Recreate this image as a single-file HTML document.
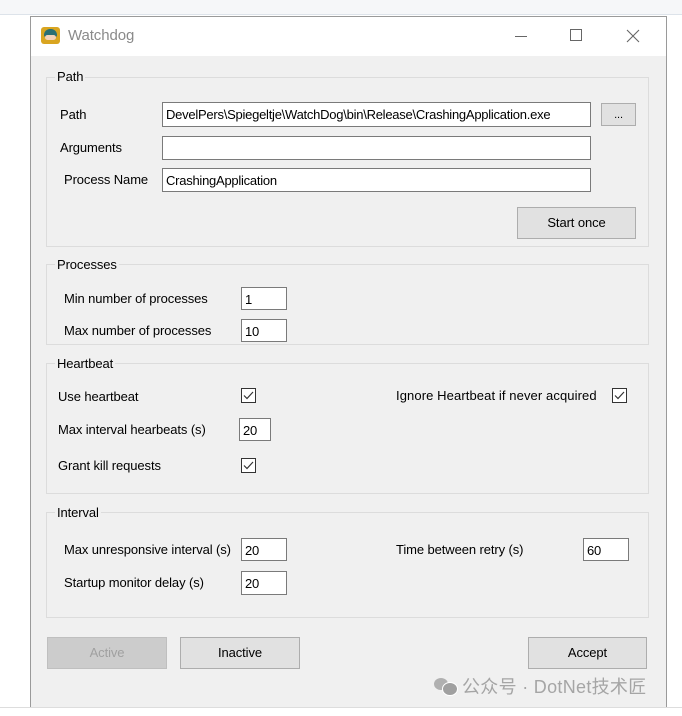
<!DOCTYPE html><html><head><style>
body{margin:0;width:682px;height:716px;background:#fff;position:relative;overflow:hidden;font-family:"Liberation Sans","Noto Sans CJK SC",sans-serif;font-size:13px;letter-spacing:-0.1px;color:#000}
.a{position:absolute}
.top{left:0;top:0;width:682px;height:14px;background:#f6f7f9;border-bottom:1px solid #dde3ea}
.win{left:30px;top:16px;width:635px;height:690px;border:1px solid #9a9a9a;background:#f0f0f0}
.tb{left:0;top:0;width:635px;height:39px;background:#fff}
.g{position:absolute;border:1px solid #dcdcdc}
.lg{position:absolute;background:#f0f0f0;padding:0 2px}
.t{position:absolute;background:#fff;border:1px solid #7a7a7a;box-sizing:border-box;padding:3px 3px;line-height:17px;white-space:nowrap;overflow:hidden;letter-spacing:-0.25px}
.b{position:absolute;background:#e1e1e1;border:1px solid #adadad;box-sizing:border-box;text-align:center}
.c{position:absolute;width:15px;height:15px;border:1px solid #333;box-sizing:border-box;background:#fff}
.l{position:absolute;white-space:nowrap;line-height:16px}
</style></head><body>
<div class="a top"></div>
<div class="a win">
<div class="a tb">
<div class="a" style="left:10px;top:10px;width:19px;height:17px;background:#d9a520;border-radius:3px"></div>
<div class="a" style="left:13px;top:12px;width:13px;height:8px;background:#2a6f73;border-radius:6px 6px 2px 2px"></div>
<div class="a" style="left:14px;top:18px;width:11px;height:5px;background:#f2d1b8;border-radius:3px"></div>
<div class="l" style="left:37px;top:11px;color:#8a8a8a;font-size:15px">Watchdog</div>
<div class="a" style="left:484px;top:19px;width:12px;height:1px;background:#666"></div>
<div class="a" style="left:539px;top:12px;width:12px;height:12px;border:1px solid #666;box-sizing:border-box"></div>
<svg class="a" style="left:595px;top:12px" width="14" height="14"><path d="M1 1L13 13M13 1L1 13" stroke="#666" stroke-width="1.1"/></svg>
</div>
</div>
<div class="g" style="left:46px;top:77px;width:601px;height:168px"></div>
<div class="lg l" style="left:55px;top:69px">Path</div>
<div class="l" style="left:60px;top:107px">Path</div>
<div class="t" style="left:162px;top:102px;width:429px;height:25px">DevelPers\Spiegeltje\WatchDog\bin\Release\CrashingApplication.exe</div>
<div class="b" style="left:601px;top:103px;width:35px;height:23px;line-height:22px;font-size:11px">...</div>
<div class="l" style="left:60px;top:140px">Arguments</div>
<div class="t" style="left:162px;top:136px;width:429px;height:24px"></div>
<div class="l" style="left:64px;top:172px">Process Name</div>
<div class="t" style="left:162px;top:168px;width:429px;height:24px">CrashingApplication</div>
<div class="b" style="left:517px;top:207px;width:119px;height:32px;line-height:30px">Start once</div>
<div class="g" style="left:46px;top:264px;width:601px;height:79px"></div>
<div class="lg l" style="left:55px;top:257px">Processes</div>
<div class="l" style="left:64px;top:291px">Min number of processes</div>
<div class="t" style="left:241px;top:287px;width:46px;height:23px">1</div>
<div class="l" style="left:64px;top:323px">Max number of processes</div>
<div class="t" style="left:241px;top:319px;width:46px;height:23px">10</div>
<div class="g" style="left:46px;top:363px;width:601px;height:129px"></div>
<div class="lg l" style="left:55px;top:356px">Heartbeat</div>
<div class="l" style="left:58px;top:389px">Use heartbeat</div>
<div class="c" style="left:241px;top:388px"></div>
<div class="l" style="left:58px;top:422px">Max interval hearbeats (s)</div>
<div class="t" style="left:239px;top:418px;width:32px;height:23px">20</div>
<div class="l" style="left:58px;top:458px">Grant kill requests</div>
<div class="c" style="left:241px;top:458px"></div>
<div class="l" style="left:396px;top:388px;letter-spacing:0.1px">Ignore Heartbeat if never acquired</div>
<div class="c" style="left:612px;top:388px"></div>
<svg class="a" style="left:241px;top:388px" width="15" height="15"><path d="M3 7.5L6 10.5L12 4" stroke="#333" fill="none" stroke-width="1.2"/></svg>
<svg class="a" style="left:241px;top:458px" width="15" height="15"><path d="M3 7.5L6 10.5L12 4" stroke="#333" fill="none" stroke-width="1.2"/></svg>
<svg class="a" style="left:612px;top:388px" width="15" height="15"><path d="M3 7.5L6 10.5L12 4" stroke="#333" fill="none" stroke-width="1.2"/></svg>
<div class="g" style="left:46px;top:512px;width:601px;height:104px"></div>
<div class="lg l" style="left:55px;top:505px">Interval</div>
<div class="l" style="left:64px;top:542px">Max unresponsive interval (s)</div>
<div class="t" style="left:241px;top:538px;width:46px;height:23px">20</div>
<div class="l" style="left:64px;top:575px">Startup monitor delay (s)</div>
<div class="t" style="left:241px;top:571px;width:46px;height:24px">20</div>
<div class="l" style="left:396px;top:542px">Time between retry (s)</div>
<div class="t" style="left:583px;top:538px;width:46px;height:23px">60</div>
<div class="b" style="left:47px;top:637px;width:120px;height:32px;line-height:30px;background:#cccccc;border-color:#bfbfbf;color:#a0a0a0">Active</div>
<div class="b" style="left:180px;top:637px;width:120px;height:32px;line-height:30px">Inactive</div>
<div class="b" style="left:528px;top:637px;width:119px;height:32px;line-height:30px">Accept</div>
<div class="a" style="left:434px;top:678px;width:14px;height:12px;background:#b0b0b0;border-radius:50%"></div>
<div class="a" style="left:442px;top:682px;width:14px;height:12px;background:#a0a0a0;border-radius:50%;border:1px solid #fff"></div>
<div class="l" style="left:462px;top:677px;color:#a5a5a5;font-size:18px;line-height:20px;letter-spacing:0.3px">公众号 · DotNet技术匠</div>
<div class="a" style="left:0;top:707px;width:682px;height:1px;background:#ddd"></div>
</body></html>
